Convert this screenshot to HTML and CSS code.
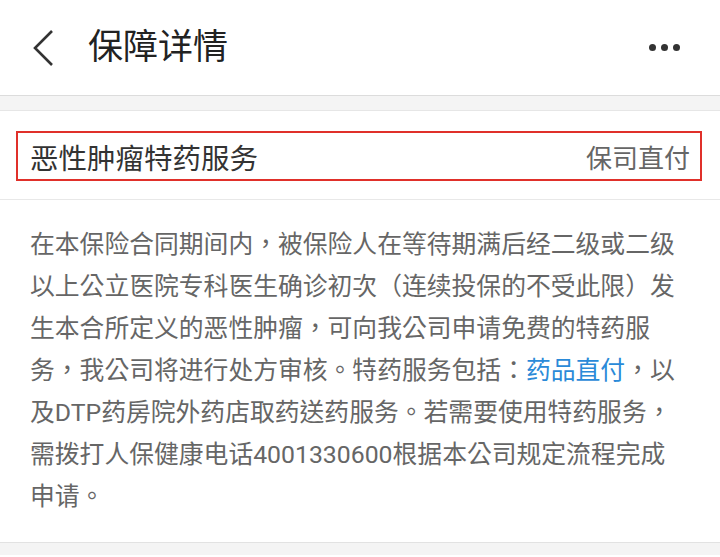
FILE: index.html
```html
<!DOCTYPE html>
<html lang="zh-CN">
<head>
<meta charset="utf-8">
<link rel="stylesheet" href="styles.css">
</head>
<body>
<header class="topbar">
  <svg class="back" width="24" height="38" viewBox="0 0 24 38"><polyline points="20,2 3,19 20,36" fill="none" stroke="#333" stroke-width="2.6"/></svg>
  <h1 class="title">保障详情</h1>
  <div class="more"><span></span><span></span><span></span></div>
</header>
<div class="gap"></div>
<section class="card">
  <div class="head-wrap">
    <div class="head">
      <span class="name">恶性肿瘤特药服务</span>
      <span class="pay">保司直付</span>
    </div>
  </div>
  <p class="desc" lang="zh-TW">在本保险合同期间内，被保险人在等待期满后经二级或二级以上公立医院专科医生确诊初次（连续投保的不受此限）发生本合所定义的恶性肿瘤，可向我公司申请免费的特药服务，我公司将进行处方审核。特药服务包括：<span class="link">药品直付</span>，以及DTP药房院外药店取药送药服务。若需要使用特药服务，需拨打人保健康电话4001330600根据本公司规定流程完成申请。</p>
</section>
<div class="gap bottom"></div>
</body>
</html>
```
FILE: styles.css
```css
html, body {
  margin: 0;
  padding: 0;
  background: #fff;
  font-family: Roboto, "Noto Sans CJK SC", sans-serif;
  color: #333;
}
.topbar {
  height: 96px;
  display: flex;
  align-items: center;
  padding: 0 40px 0 32px;
  box-sizing: border-box;
  border-bottom: 1px solid #dcdcdc;
}
.back {
  display: block;
}
.title {
  margin: 0 0 0 32px;
  font-size: 35px;
  font-weight: 400;
  color: #222;
  flex: 1;
  line-height: 1;
}
.more {
  display: flex;
  gap: 5px;
}
.more span {
  width: 7px;
  height: 7px;
  border-radius: 50%;
  background: #333;
}
.gap {
  height: 14px;
  background: #f4f4f4;
  border-bottom: 1px solid #e6e6e6;
}
.gap.bottom {
  height: 12px;
  border-bottom: none;
  border-top: 1px solid #e2e2e2;
}
.card {
  background: #fff;
}
.head-wrap {
  padding: 20px 18px 18px 16px;
  border-bottom: 1px solid #e8e8e8;
}
.head {
  height: 50px;
  box-sizing: border-box;
  border: 2px solid #e0302a;
  display: flex;
  align-items: center;
  justify-content: space-between;
  padding: 0 10px 0 12px;
}
.name {
  font-size: 28.5px;
  color: #333;
}
.pay {
  font-size: 26px;
  color: #666;
}
.desc {
  margin: 0;
  padding: 24px 30px 24px 30px;
  font-family: Roboto, "Noto Sans CJK TC", sans-serif;
  font-size: 24.8px;
  line-height: 42px;
  color: #666;
}
.link {
  color: #2a8ad8;
}
```
